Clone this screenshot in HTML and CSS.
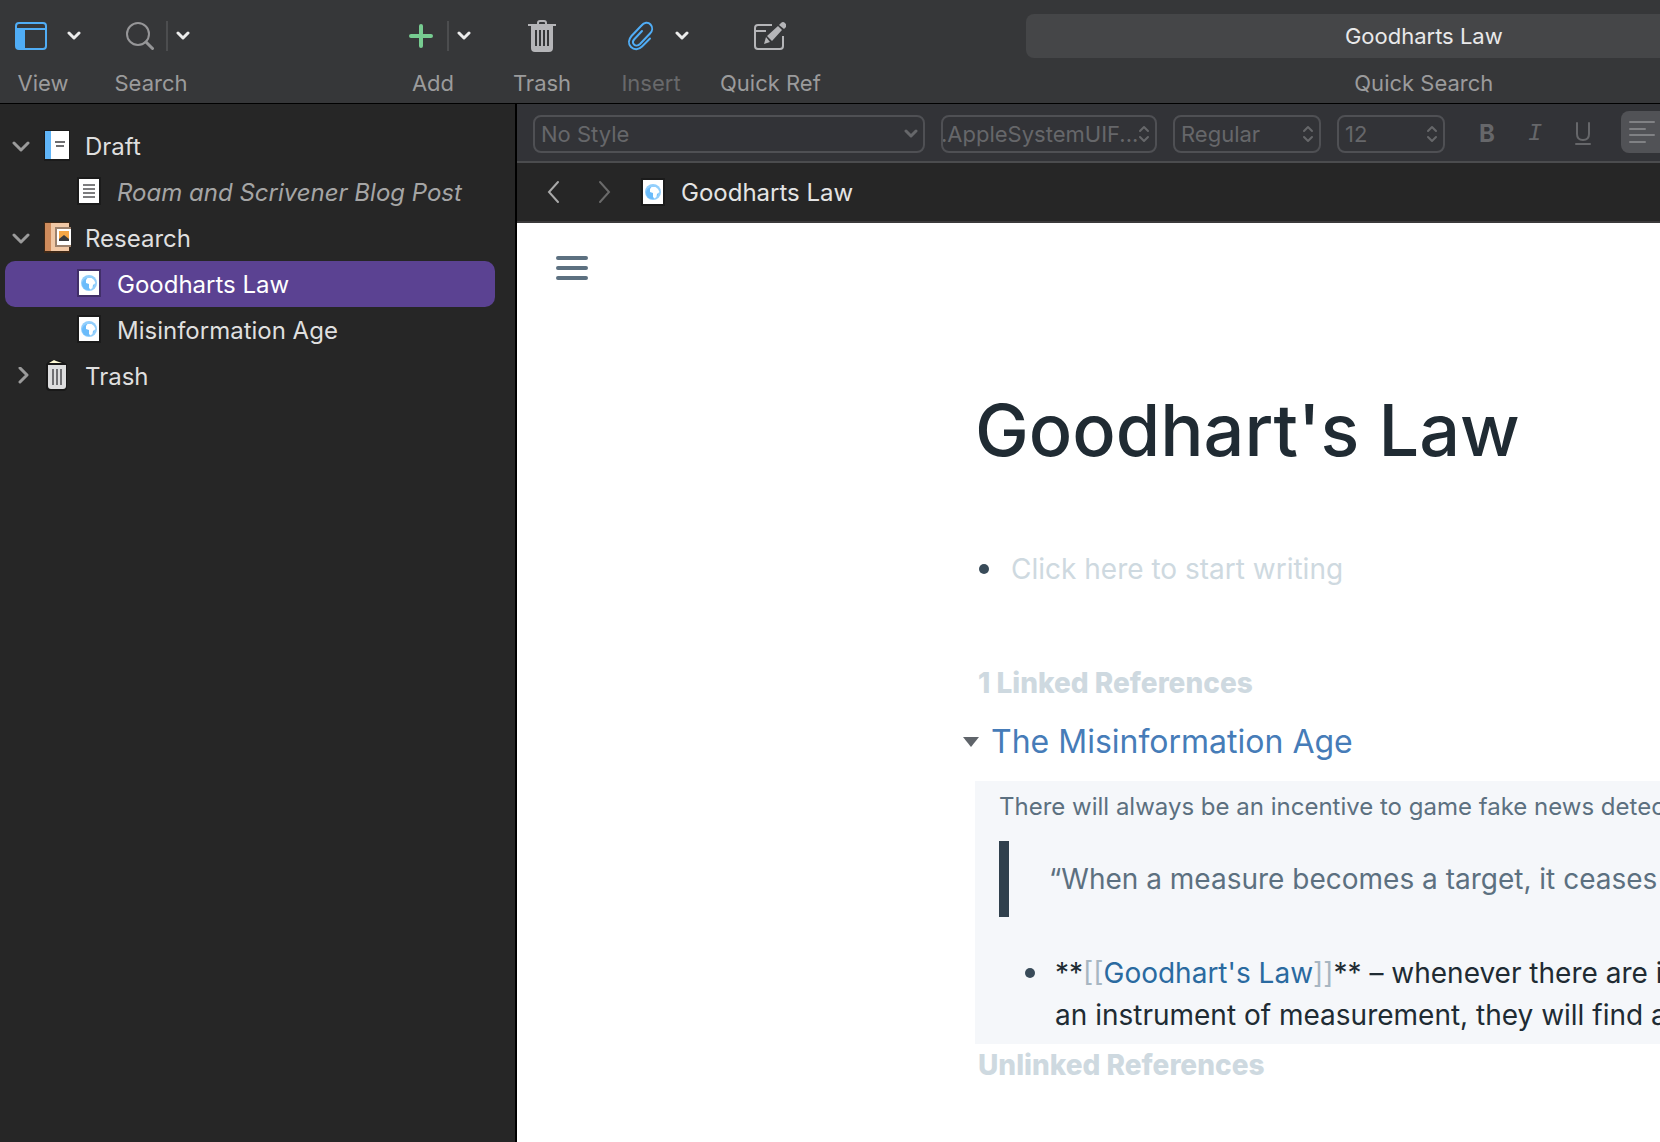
FILE: index.html
```html
<!DOCTYPE html>
<html lang="en">
<head>
<meta charset="utf-8">
<title>Goodharts Law</title>
<link rel="stylesheet" href="styles.css">
</head>
<body>
<svg class="sprite" aria-hidden="true">
  <symbol id="chevron-down" viewBox="0 0 14 10"><path d="M2 2l5 5 5-5" fill="none" stroke="currentColor" stroke-width="3" stroke-linecap="round" stroke-linejoin="round"/></symbol>
  <symbol id="updown" viewBox="0 0 12 18"><path d="M2 6l4-4 4 4M2 12l4 4 4-4" fill="none" stroke="currentColor" stroke-width="2" stroke-linecap="round" stroke-linejoin="round"/></symbol>
  <symbol id="disclosure" viewBox="0 0 18 18"><path d="M2 6l7 7 7-7" fill="none" stroke="currentColor" stroke-width="3" stroke-linecap="round" stroke-linejoin="round"/></symbol>
  <symbol id="web-page" viewBox="0 0 24 28">
    <path d="M0 0h24v28H0z" fill="#000" fill-opacity=".28"/><path d="M2 2h20v24H2z" fill="#fff"/>
    <circle cx="12" cy="14" r="8" fill="#93cffc"/><circle cx="11" cy="15" r="6" fill="#6bbcfb"/>
    <path d="M9 11l1.500-2h4l2.500 2 1.500 3-2.500 2-.5 3-2 1.500-1.500-1.500v-4l-3-1z" fill="#fff"/>
  </symbol>
</svg>

<header class="toolbar">
  <button class="tool" type="button">
    <span class="tool-icons view-icons">
      <svg width="32" height="28" viewBox="0 0 32 28"><rect x="1" y="1" width="30" height="26" rx="3" fill="none" stroke="#50adf6" stroke-width="2"/><path d="M1 6h30v2H10v19H3q-2 0-2-2z" fill="#50adf6"/></svg>
      <svg class="caret" width="14" height="10"><use href="#chevron-down"/></svg>
    </span>
    <span>View</span>
  </button>
  <button class="tool" type="button">
    <span class="tool-icons search-icons">
      <svg width="28" height="28" viewBox="0 0 28 28" fill="none" stroke="#969698"><circle cx="12" cy="12" r="11" stroke-width="2"/><path d="M20 20l6.500 6.500" stroke-width="3" stroke-linecap="round"/></svg>
      <span class="rule"></span>
      <svg class="caret" width="14" height="10"><use href="#chevron-down"/></svg>
    </span>
    <span>Search</span>
  </button>
  <span class="space"></span>
  <button class="tool" type="button">
    <span class="tool-icons">
      <svg width="24" height="24" viewBox="0 0 24 24"><path d="M12 2v20M2 12h20" stroke="#77cc91" stroke-width="4" stroke-linecap="round"/></svg>
      <span class="rule"></span>
      <svg class="caret" width="14" height="10"><use href="#chevron-down"/></svg>
    </span>
    <span>Add</span>
  </button>
  <button class="tool" type="button">
    <span class="tool-icons single">
      <svg width="28" height="32" viewBox="0 0 28 32"><path d="M10 5V3q0-2 2-2h4q2 0 2 2v2" fill="none" stroke="#b5b5b8" stroke-width="2"/><path d="M0 4h28v2h-3v22q0 4-4 4H7q-4 0-4-4V6H0z" fill="#b5b5b8"/><path d="M8 10v16M12 10v16M16 10v16M20 10v16" stroke="#363739" stroke-width="2"/></svg>
    </span>
    <span>Trash</span>
  </button>
  <button class="tool" type="button" disabled>
    <span class="tool-icons">
      <svg width="27" height="30" viewBox="0 0 27 30"><path d="M23 17.500l-8 8C11.500 29 7 29 4 26s-2.500-7.500.5-11l10-10.500c2.500-3 6.500-3.700 9-1s2 6.500-.5 9l-10 10.500c-2 2-4.500 2-6 .5s-1.200-3.700.5-5.500l7.500-8" fill="none" stroke="#50adf6" stroke-width="2" stroke-linecap="round"/></svg>
      <svg class="caret" width="14" height="10"><use href="#chevron-down"/></svg>
    </span>
    <span>Insert</span>
  </button>
  <button class="tool" type="button">
    <span class="tool-icons single">
      <svg width="32" height="28" viewBox="0 0 32 28"><path d="M18 3H4Q1 3 1 6v18q0 3 3 3h22q3 0 3-3V14M1 9h11" fill="none" stroke="#b5b5b8" stroke-width="2"/><path d="M10 22l2-7 4 5zM13 14L24 4l4 4-10 11zM25 3l2-2q2-2 4 0t1 4l-2 2z" fill="#b5b5b8"/></svg>
    </span>
    <span>Quick Ref</span>
  </button>
  <span class="space"></span>
  <div class="quick-search">
    <input id="quick-search" type="text" value="Goodharts Law">
    <label for="quick-search">Quick Search</label>
  </div>
</header>

<div class="workspace">
  <nav class="binder" aria-label="Binder">
    <ul>
      <li><a class="row" href="#draft">
        <svg class="twist" width="18" height="18"><use href="#disclosure"/></svg>
        <svg class="book" width="28" height="32" viewBox="0 0 28 32"><path d="M1 0h26v31H1z" fill="#1b1b1b"/><path d="M2 1h6v28H2z" fill="#60b5f8"/><path d="M8 1h18v28H8z" fill="#fff"/><path d="M12 12h10M13 16h8" stroke="#6d6d6f" stroke-width="2"/></svg>
        <span>Draft</span></a>
        <ul>
          <li><a class="row child" href="#post">
            <svg width="24" height="28" viewBox="0 0 24 28"><path d="M0 0h24v28H0z" fill="#1b1b1b"/><path d="M2 2h20v24H2z" fill="#fff"/><path d="M6 8h12M6 12h12M6 16h12M6 20h12" stroke="#7c7c7e" stroke-width="2"/></svg>
            <em>Roam and Scrivener Blog Post</em></a></li>
        </ul>
      </li>
      <li><a class="row" href="#research">
        <svg class="twist" width="18" height="18"><use href="#disclosure"/></svg>
        <svg class="book" width="28" height="32" viewBox="0 0 28 32"><path d="M1 0h26v31H1z" fill="#3d2817"/><path d="M2 1h6v28H2z" fill="#ce8b5c"/><path d="M8 1h18v28H8z" fill="#f1c8a5"/><path d="M12 5h16v20H12z" fill="#9c816c"/><path d="M14 7h14v16H14z" fill="#fff"/><path d="M16 9h10v10H16z" fill="#f6a747"/><path d="M16 19v-2l5-4 5 4v2z" fill="#3b3b3d"/></svg>
        <span>Research</span></a>
        <ul>
          <li><a class="row child selected" href="#goodhart" aria-current="page"><svg width="24" height="28"><use href="#web-page"/></svg><span>Goodharts Law</span></a></li>
          <li><a class="row child" href="#misinformation"><svg width="24" height="28"><use href="#web-page"/></svg><span>Misinformation Age</span></a></li>
        </ul>
      </li>
      <li><a class="row" href="#trash">
        <svg class="twist" width="18" height="18" viewBox="0 0 18 18"><path d="M8 1l7 7-7 7" fill="none" stroke="currentColor" stroke-width="3" stroke-linecap="round" stroke-linejoin="round"/></svg>
        <svg class="book" width="28" height="32" viewBox="0 0 28 32"><path d="M3 4l4-4h9l8 4v23q0 4-4 4H7q-4 0-4-4z" fill="#191919"/><path d="M6 3l5-3 2 1 6 2z" fill="#fffbd5"/><path d="M5 5h18v21q0 3-3 3H8q-3 0-3-3z" fill="#dededf"/><path d="M10 9v16M14 9v16M18 9v16" stroke="#707073" stroke-width="2"/></svg>
        <span>Trash</span></a></li>
    </ul>
  </nav>

  <main class="editor">
    <div class="format-bar">
      <span class="picker style"><select aria-label="Style" disabled><option>No Style</option></select><svg width="14" height="10"><use href="#chevron-down"/></svg></span>
      <span class="picker font"><select aria-label="Font" disabled><option>.AppleSystemUIF...</option></select><svg width="12" height="18"><use href="#updown"/></svg></span>
      <span class="picker face"><select aria-label="Typeface" disabled><option>Regular</option></select><svg width="12" height="18"><use href="#updown"/></svg></span>
      <span class="picker size"><select aria-label="Size" disabled><option>12</option></select><svg width="12" height="18"><use href="#updown"/></svg></span>
      <div class="marks">
        <button class="bold" type="button" disabled>B</button>
        <button class="italic" type="button" disabled>I</button>
        <button class="underline" type="button" aria-label="Underline" disabled><svg width="16" height="24" viewBox="0 0 16 24" fill="none" stroke="currentColor" stroke-width="2" stroke-linecap="round"><path d="M2 1v11q0 6 6 6t6-6V1M1 22h14"/></svg></button>
      </div>
      <button class="align" type="button" aria-label="Align left" disabled><svg width="26" height="26" viewBox="0 0 26 26" fill="none" stroke="currentColor" stroke-width="2" stroke-linecap="round"><path d="M1 3h24M1 10h15M1 16h24M1 23h15"/></svg></button>
    </div>

    <div class="title-bar">
      <button type="button" aria-label="Back"><svg width="14" height="24" viewBox="0 0 14 24"><path d="M12 2L3 12l9 10" fill="none" stroke="#a9a9a9" stroke-width="2" stroke-linecap="round"/></svg></button>
      <button type="button" aria-label="Forward"><svg width="14" height="24" viewBox="0 0 14 24"><path d="M2 2l9 10-9 10" fill="none" stroke="#6a6a6a" stroke-width="2" stroke-linecap="round"/></svg></button>
      <svg width="24" height="28"><use href="#web-page"/></svg>
      <span>Goodharts Law</span>
    </div>

    <div class="page">
      <button class="menu" type="button" aria-label="Menu"><svg width="34" height="24" viewBox="0 0 34 24"><path d="M3 2h28M3 12h28M3 22h28" stroke="#5c7080" stroke-width="4" stroke-linecap="round"/></svg></button>
      <article>
        <h1>Goodhart's Law</h1>
        <ul class="blocks"><li class="empty">Click here to start writing</li></ul>
        <h2>1 Linked References</h2>
        <h3><svg width="18" height="12" viewBox="0 0 18 12"><path d="M1 1h16L9 11z" fill="#5f646a"/></svg><a href="#misinformation">The Misinformation Age</a></h3>
        <section class="reference">
          <p>There will always be an incentive to game fake news detection</p>
          <blockquote>“When a measure becomes a target, it ceases</blockquote>
          <ul class="blocks"><li>**<span class="bracket">[[</span><a href="#goodhart">Goodhart's Law</a><span class="bracket">]]</span>** – whenever there are incentives<br>an instrument of measurement, they will find a</li></ul>
        </section>
        <h2>Unlinked References</h2>
      </article>
    </div>
  </main>
</div>
</body>
</html>
```
FILE: styles.css
```css
* { box-sizing: border-box; }

body {
  margin: 0;
  min-height: 100vh;
  display: flex;
  flex-direction: column;
  overflow-x: hidden;
  background: #262626;
  font-family: Inter, "Liberation Sans", sans-serif;
  font-size: 24px;
}

button, input, select { font: inherit; color: inherit; }
button { padding: 0; border: 0; background: none; }
a { color: inherit; text-decoration: none; }
ul { margin: 0; padding: 0; list-style: none; }
svg { display: block; flex: none; }
.sprite { position: absolute; width: 0; height: 0; }

/* Toolbar */
.toolbar {
  display: flex;
  gap: 31px;
  height: 104px;
  padding-left: 5px;
  overflow: hidden;
  background: #363739;
  border-bottom: 1px solid #000;
  color: #9b9b9c;
  font-size: 22px;
  line-height: 28px;
}
.toolbar > * { flex: none; }
.tool {
  display: flex;
  flex-direction: column;
  align-items: center;
}
.tool:disabled { color: #68696b; }
.tool-icons {
  display: flex;
  align-items: center;
  width: 76px;
  height: 69px;
  padding: 3px 0 0 14px;
}
.view-icons { padding-left: 10px; }
.search-icons { width: 78px; }
.single { justify-content: center; width: 80px; padding-left: 0; }
.caret { margin-left: auto; color: #ececec; }
.rule {
  width: 2px;
  height: 30px;
  margin-left: auto;
  background: #4c4d4f;
}
.rule + .caret { margin-left: 8px; }
.space { width: 143px; }
.quick-search {
  display: flex;
  flex-direction: column;
  gap: 11px;
  width: 796px;
  padding-top: 14px;
  text-align: center;
}
.quick-search input {
  height: 44px;
  border: 0;
  border-radius: 8px;
  background: #454648;
  color: #e9e9ea;
  text-align: center;
}

/* Binder */
.workspace { display: flex; flex: 1; }
.binder {
  flex: none;
  width: 517px;
  padding: 19px 20px 0 5px;
  border-right: 2px solid #000;
  color: #dfdfdf;
}
.row {
  display: flex;
  align-items: center;
  height: 46px;
  padding-left: 7px;
  border-radius: 10px;
}
.twist { color: #9b9b9b; }
.book { margin: 0 14px 0 13px; }
.child { gap: 16px; padding-left: 72px; }
.child svg { margin-bottom: 2px; }
.child em { color: #a5a5a5; }
.selected { background: #5b4292; color: #fff; }

/* Editor */
.editor {
  flex: 1;
  min-width: 0;
  display: flex;
  flex-direction: column;
  overflow: hidden;
}
.format-bar {
  display: flex;
  align-items: center;
  gap: 16px;
  height: 59px;
  padding: 2px 0 0 16px;
  background: #323337;
  border-bottom: 2px solid #4b4c4e;
  color: #66676a;
  font-size: 22px;
}
.format-bar > * { flex: none; }
.picker { position: relative; height: 38px; }
.picker select {
  appearance: none;
  width: 100%;
  height: 100%;
  padding: 0 6px;
  border: 2px solid #4f5054;
  border-radius: 8px;
  background: none;
  opacity: 1;
}
.picker svg {
  position: absolute;
  top: 0;
  bottom: 0;
  right: 7px;
  margin: auto;
  pointer-events: none;
}
.style { width: 392px; }
.font { width: 216px; }
.font select { padding: 0; text-indent: -2px; }
.face { width: 148px; }
.size { width: 108px; }
.marks { display: flex; gap: 16px; margin-left: 10px; }
.marks button {
  display: flex;
  justify-content: center;
  align-items: center;
  width: 32px;
  height: 38px;
  font-size: 24px;
}
.bold { font-weight: 700; }
.italic { font-family: "Liberation Mono", monospace; font-style: italic; }
.align {
  width: 60px;
  height: 42px;
  margin: 0 0 4px 6px;
  padding-left: 8px;
  border-radius: 8px;
  background: #515256;
  color: #808184;
}

.title-bar {
  display: flex;
  align-items: center;
  height: 60px;
  padding-left: 29px;
  border-bottom: 2px solid #3b3a3b;
  color: #e4e4e4;
}
.title-bar button { margin-right: 38px; }
.title-bar button + svg { margin: 0 16px 0 -9px; }

.page {
  flex: 1;
  padding: 33px 0 0 38px;
  background: #fff;
  color: #202b33;
  font-size: 28px;
  line-height: 42px;
}
.menu { display: block; }
.page article {
  width: 1200px;
  padding: 104px 0 0 423px;
  white-space: nowrap;
}
h1, h2, h3, p, blockquote { margin: 0; }
h1 {
  margin-left: -3px;
  font-size: 72px;
  font-weight: 500;
  line-height: 92px;
}
h2 {
  color: #ced9e0;
  font-size: 28px;
  font-weight: 800;
}
h3 {
  display: flex;
  align-items: center;
  gap: 11px;
  margin: 15px 0 16px -16px;
  color: #467cb8;
  font-size: 32px;
  font-weight: 400;
  line-height: 46px;
}
.blocks li { position: relative; padding-left: 33px; }
.blocks li::before {
  content: "";
  position: absolute;
  top: 16px;
  left: 1px;
  width: 10px;
  height: 10px;
  border-radius: 50%;
  background: #394b59;
}
.blocks .empty { margin: 72px 0; color: #ced9e0; }
.reference {
  margin-left: -3px;
  padding: 5px 0 8px 24px;
  background: #f5f7fa;
}
.reference p { color: #5c7080; font-size: 24px; line-height: 42px; }
.reference blockquote {
  margin: 13px 0 35px;
  padding: 17px 40px;
  border-left: 10px solid #30404d;
  color: #5c7080;
}
.reference .blocks { padding-left: 25px; }
.reference .blocks li { padding-left: 31px; }
.reference .blocks a { color: #2a6aa0; }
.bracket { color: #a7b6c2; }
```
